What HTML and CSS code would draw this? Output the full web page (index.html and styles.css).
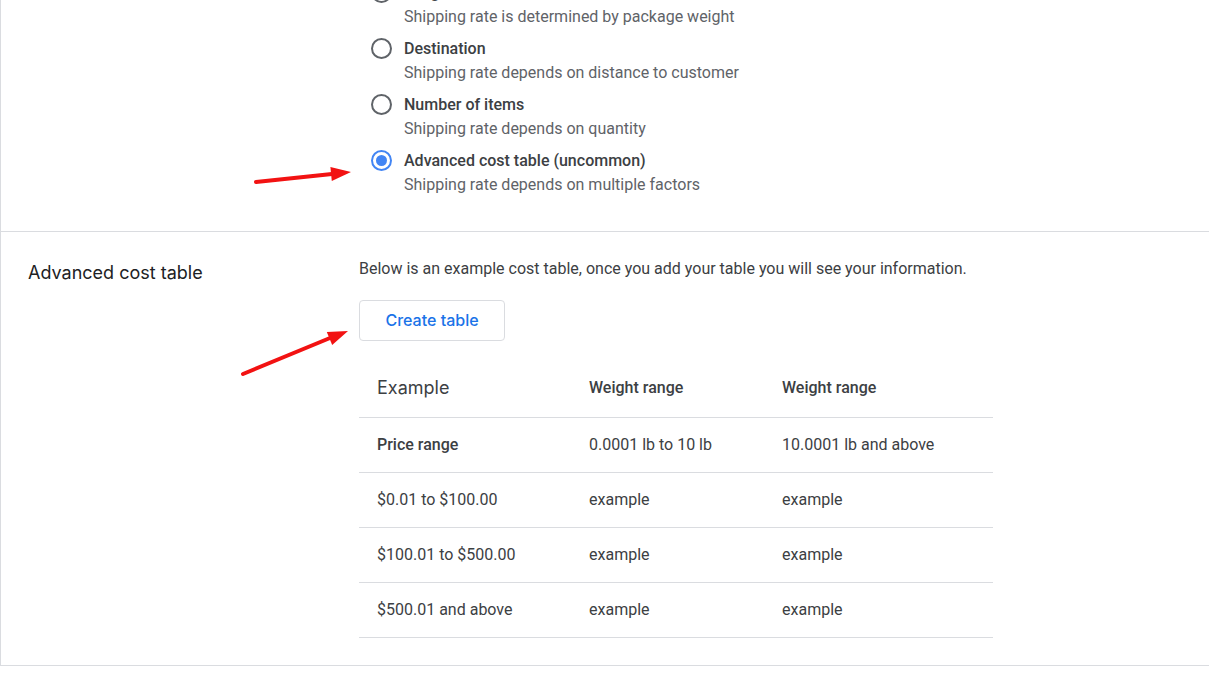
FILE: index.html
```html
<!DOCTYPE html>
<html>
<head>
    <link rel="stylesheet" href="styles.css">
</head>
<body>
    <div class="card">
        <section class="section section-rates">
            <div class="section-label"></div>
            <div class="radio-list">
                <div class="radio-row">
                    <span class="radio"></span>
                    <div class="radio-text">
                        <div class="radio-title">Weight</div>
                        <div class="radio-sub">Shipping rate is determined by package weight</div>
                    </div>
                </div>
                <div class="radio-row">
                    <span class="radio"></span>
                    <div class="radio-text">
                        <div class="radio-title">Destination</div>
                        <div class="radio-sub">Shipping rate depends on distance to customer</div>
                    </div>
                </div>
                <div class="radio-row">
                    <span class="radio"></span>
                    <div class="radio-text">
                        <div class="radio-title">Number of items</div>
                        <div class="radio-sub">Shipping rate depends on quantity</div>
                    </div>
                </div>
                <div class="radio-row">
                    <span class="radio checked"></span>
                    <div class="radio-text">
                        <div class="radio-title">Advanced cost table (uncommon)</div>
                        <div class="radio-sub">Shipping rate depends on multiple factors</div>
                    </div>
                </div>
            </div>
        </section>

        <section class="section section-table">
            <div class="section-label">Advanced cost table</div>
            <div class="section-body">
                <p class="intro">Below is an example cost table, once you add your table you will see your information.</p>
                <button class="btn-outline">Create table</button>
                <div class="cost-table">
                    <div class="row head">
                        <div class="cell title">Example</div>
                        <div class="cell">Weight range</div>
                        <div class="cell">Weight range</div>
                    </div>
                    <div class="row">
                        <div class="cell strong">Price range</div>
                        <div class="cell">0.0001 lb to 10 lb</div>
                        <div class="cell">10.0001 lb and above</div>
                    </div>
                    <div class="row">
                        <div class="cell">$0.01 to $100.00</div>
                        <div class="cell">example</div>
                        <div class="cell">example</div>
                    </div>
                    <div class="row">
                        <div class="cell">$100.01 to $500.00</div>
                        <div class="cell">example</div>
                        <div class="cell">example</div>
                    </div>
                    <div class="row">
                        <div class="cell">$500.01 and above</div>
                        <div class="cell">example</div>
                        <div class="cell">example</div>
                    </div>
                </div>
            </div>
        </section>
    </div>

    <!-- annotation arrows -->
    <svg class="arrows" width="1209" height="695" viewBox="0 0 1209 695">
        <line x1="256" y1="182" x2="332" y2="174" stroke="#f21212" stroke-width="4" stroke-linecap="round"/>
        <polygon points="351,172 331.8,181.1 330.4,167.1" fill="#f21212"/>
        <line x1="243" y1="374" x2="330" y2="338" stroke="#f21212" stroke-width="4" stroke-linecap="round"/>
        <polygon points="348,331 332.2,345.1 326.8,332.1" fill="#f21212"/>
    </svg>
</body>
</html>
```

FILE: styles.css
```css
body {
    margin: 0;
    position: relative;
    background: #fff;
    font-family: Roboto, 'Liberation Sans', sans-serif;
    color: #3c4043;
    overflow: hidden;
}

.card {
    margin-top: -43px;
    margin-right: -20px;
    border-left: 1px solid #dadce0;
    border-bottom: 1px solid #dadce0;
}

.section {
    display: grid;
    grid-template-columns: 358px 1fr;
}

.section + .section {
    border-top: 1px solid #dadce0;
}

.section-label {
    padding-left: 27px;
    font-family: Inter, 'Open Sans', sans-serif;
    font-size: 18px;
    color: #202124;
    line-height: 24px;
    padding-top: 29px;
}

/* shipping rate options */
.section-rates {
    padding: 24px 0 34px;
}

.section-rates .section-label {
    padding-top: 0;
}

.radio-list {
    padding-left: 12px;
    display: flex;
    flex-direction: column;
    gap: 8px;
}

.radio-row {
    display: flex;
    align-items: flex-start;
    gap: 12px;
}

.radio {
    width: 17px;
    height: 17px;
    margin-top: 1px;
    border: 2px solid #5f6368;
    border-radius: 50%;
    flex-shrink: 0;
    display: flex;
    align-items: center;
    justify-content: center;
}

.radio.checked {
    border-color: #4285f4;
}

.radio.checked::after {
    content: "";
    width: 11px;
    height: 11px;
    border-radius: 50%;
    background: #4285f4;
}

.radio-title {
    font-size: 16px;
    font-weight: 500;
    line-height: 24px;
    color: #3c4043;
}

.radio-sub {
    font-size: 16px;
    line-height: 24px;
    color: #5f6368;
}

/* cost table section */
.section-table {
    padding-bottom: 27px;
}

.section-body {
    padding-top: 27px;
}

.intro {
    margin: 0;
    font-size: 16px;
    line-height: 20px;
    color: #3c4043;
}

.btn-outline {
    margin-top: 21px;
    height: 41px;
    width: 146px;
    padding-bottom: 3px;
    background: #fff;
    border: 1px solid #dadce0;
    border-radius: 4px;
    color: #1a73e8;
    font-family: Inter, 'Open Sans', sans-serif;
    font-size: 16px;
    font-weight: 500;
    cursor: pointer;
}

.cost-table {
    margin-top: 18px;
    width: 634px;
}

.row {
    display: grid;
    grid-template-columns: 212px 193px 1fr;
    height: 54px;
    padding-bottom: 2px;
    box-sizing: border-box;
    align-items: center;
    border-bottom: 1px solid #dadce0;
    font-size: 16px;
}

.row + .row {
    height: 55px;
}

.row.head {
    height: 59px;
    font-weight: 500;
}

.cell {
    padding-left: 18px;
}

.cell.title {
    font-family: Inter, 'Open Sans', sans-serif;
    font-size: 18px;
    font-weight: 400;
}

.cell.strong {
    font-weight: 500;
}

.arrows {
    position: absolute;
    top: 0;
    left: 0;
    pointer-events: none;
}
```
